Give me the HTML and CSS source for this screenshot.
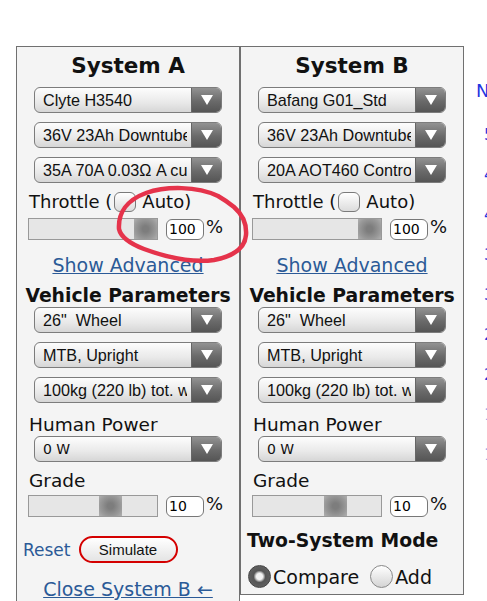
FILE: index.html
```html
<!DOCTYPE html>
<html lang="en">
<head>
  <meta charset="UTF-8">
  <meta name="viewport" content="width=device-width, initial-scale=1.0">
  <title>Motor Simulator</title>
  <link rel="stylesheet" href="styles.css">
</head>
<body>
  <div class="app">
    <section class="panel panel-a">
      <h2>System A</h2>
      <div class="stack">
        <div class="select"><span class="val">Clyte H3540</span><span class="arrow"></span></div>
        <div class="select"><span class="val">36V 23Ah Downtube</span><span class="arrow"></span></div>
        <div class="select"><span class="val">35A 70A 0.03Ω A custom</span><span class="arrow"></span></div>
      </div>
      <label class="check-row">Throttle (<input type="checkbox" class="check"><span class="auto">Auto)</span></label>
      <div class="slider-row">
        <div class="slider"><span class="thumb" style="margin-left:105px"></span></div>
        <input class="num" type="text" value="100"><span class="pct">%</span>
      </div>
      <a class="link show-adv" href="#">Show Advanced</a>
      <div class="heading">Vehicle Parameters</div>
      <div class="stack flush">
        <div class="select"><span class="val">26"&nbsp; Wheel</span><span class="arrow"></span></div>
        <div class="select"><span class="val">MTB, Upright</span><span class="arrow"></span></div>
        <div class="select"><span class="val">100kg (220 lb) tot. weight</span><span class="arrow"></span></div>
      </div>
      <div class="label human">Human Power</div>
      <div class="stack flush">
        <div class="select"><span class="val small">0 W</span><span class="arrow"></span></div>
      </div>
      <div class="label grade">Grade</div>
      <div class="slider-row tight">
        <div class="slider"><span class="thumb" style="margin-left:70px"></span></div>
        <input class="num" type="text" value="10"><span class="pct">%</span>
      </div>
      <div class="actions">
        <a class="reset" href="#">Reset</a>
        <button class="simulate">Simulate</button>
      </div>
      <a class="link close-b" href="#">Close System B ←</a>
    </section>

    <section class="panel panel-b">
      <h2>System B</h2>
      <div class="stack">
        <div class="select"><span class="val">Bafang G01_Std</span><span class="arrow"></span></div>
        <div class="select"><span class="val">36V 23Ah Downtube</span><span class="arrow"></span></div>
        <div class="select"><span class="val">20A AOT460 Controller</span><span class="arrow"></span></div>
      </div>
      <label class="check-row">Throttle (<input type="checkbox" class="check"><span class="auto">Auto)</span></label>
      <div class="slider-row">
        <div class="slider"><span class="thumb" style="margin-left:105px"></span></div>
        <input class="num" type="text" value="100"><span class="pct">%</span>
      </div>
      <a class="link show-adv" href="#">Show Advanced</a>
      <div class="heading">Vehicle Parameters</div>
      <div class="stack flush">
        <div class="select"><span class="val">26"&nbsp; Wheel</span><span class="arrow"></span></div>
        <div class="select"><span class="val">MTB, Upright</span><span class="arrow"></span></div>
        <div class="select"><span class="val">100kg (220 lb) tot. weight</span><span class="arrow"></span></div>
      </div>
      <div class="label human">Human Power</div>
      <div class="stack flush">
        <div class="select"><span class="val small">0 W</span><span class="arrow"></span></div>
      </div>
      <div class="label grade">Grade</div>
      <div class="slider-row tight">
        <div class="slider"><span class="thumb" style="margin-left:71px"></span></div>
        <input class="num" type="text" value="10"><span class="pct">%</span>
      </div>
      <div class="mode-title">Two-System Mode</div>
      <div class="mode-row">
        <label><input type="radio" name="mode" class="radio" checked>Compare</label>
        <label><input type="radio" name="mode" class="radio">Add</label>
      </div>
    </section>

    <div class="chart">
      <div class="axis-title">Nm</div>
      <div class="ticks">
        <span>50</span><span>45</span><span>40</span><span>35</span><span>30</span><span>25</span><span>20</span><span class="faint">15</span><span class="faint">10</span>
      </div>
    </div>
  </div>

  <!-- red marker circle drawn over the screenshot -->
  <svg class="marker" width="487" height="601" viewBox="0 0 487 601">
    <path d="M119,229 C118,213 127,200 146,193 C166,186 197,186 218,196 C225,200 229,203 234,207 C242,214 247,222 246,235 C245,247 235,256 214,260 C193,263 166,257 144,249 C131,244 121,238 119,229" />
  </svg>
</body>
</html>
```

FILE: styles.css
```css
* {
  box-sizing: border-box;
}
html, body {
  margin: 0;
  overflow: hidden;
}
body {
  font-family: "DejaVu Sans", Verdana, sans-serif;
  background: #fff;
  color: #111;
  position: relative;
  height: 601px;
}
.app {
  display: flex;
  align-items: flex-start;
  padding: 46px 0 0 16px;
}
.panel {
  width: 224px;
  flex: none;
  display: flex;
  flex-direction: column;
  background: #f4f4f4;
  border: 1px solid #707070;
  padding: 6px 0;
}
.panel-a {
  padding-bottom: 40px;
}
.panel h2 {
  margin: 0;
  font-size: 21.5px;
  line-height: 26px;
  text-align: center;
}
.stack {
  display: flex;
  flex-direction: column;
  align-items: center;
  gap: 9px;
  margin-top: 8px;
}
.stack.flush {
  margin-top: 0;
}
.select {
  width: 188px;
  height: 26px;
  display: flex;
  border: 1px solid #7c7c7c;
  border-radius: 6px;
  overflow: hidden;
  background: linear-gradient(#fdfdfd, #e9e9e9 60%, #d6d6d6);
}
.select .val {
  flex: 1;
  min-width: 0;
  margin-right: 4px;
  padding-left: 8px;
  font-family: "Liberation Sans", Arial, sans-serif;
  font-size: 16.2px;
  line-height: 24px;
  white-space: nowrap;
  overflow: hidden;
}
.select .val.small {
  font-family: "DejaVu Sans", Verdana, sans-serif;
  font-size: 14px;
}
.select .arrow {
  width: 30px;
  flex: none;
  display: flex;
  align-items: center;
  justify-content: center;
  background: linear-gradient(#929292, #6a6a6a 55%, #555);
  border-left: 1px solid #666;
}
.select .arrow::after {
  content: "";
  border-left: 6px solid transparent;
  border-right: 6px solid transparent;
  border-top: 10px solid #fff;
}
.check-row {
  display: block;
  margin-top: 7px;
  padding-left: 12px;
  font-size: 18px;
  line-height: 23px;
  height: 23px;
}
.check {
  appearance: none;
  width: 22px;
  height: 20px;
  margin: 0 4px 0 2px;
  vertical-align: -4px;
  border: 1px solid #7a7a7a;
  border-radius: 6px;
  background: linear-gradient(#fff, #dcdcdc);
}
.auto {
  margin-left: 2px;
}
.slider-row {
  display: flex;
  align-items: center;
  padding-left: 11px;
  margin-top: 5px;
  height: 22px;
}
.slider-row.tight {
  margin-top: 3px;
}
.slider {
  width: 130px;
  height: 22px;
  display: flex;
  border: 1px solid #999;
  background: #e6e6e6;
}
.thumb {
  width: 23px;
  height: 100%;
  background: radial-gradient(circle, #7d7d7d 20%, #9a9a9a 70%, #b0b0b0);
}
.num {
  width: 38px;
  height: 21px;
  margin-left: 8px;
  padding: 0 2px;
  border: 1px solid #777;
  border-radius: 6px;
  background: #fff;
  font-family: "DejaVu Sans", Verdana, sans-serif;
  font-size: 14px;
  color: #000;
}
.pct {
  margin-left: 2px;
  font-size: 18px;
  line-height: 18px;
  align-self: flex-start;
}
.link {
  display: block;
  color: #2b5a97;
  font-size: 19px;
  line-height: 22px;
  text-align: center;
}
.show-adv {
  margin-top: 14px;
}
.heading {
  margin-top: 9px;
  font-size: 18.8px;
  font-weight: bold;
  line-height: 22px;
  text-align: center;
}
.label {
  padding-left: 12px;
  font-size: 18.5px;
  line-height: 22px;
}
.human {
  margin-top: 11px;
}
.grade {
  margin-top: 8px;
}
.actions {
  display: flex;
  align-items: center;
  gap: 8px;
  margin-top: 19px;
  padding-left: 6px;
}
.reset {
  color: #2b5a97;
  font-size: 17px;
  text-decoration: none;
}
.simulate {
  width: 99px;
  height: 27px;
  border: 2px solid #d40000;
  border-radius: 14px;
  background: linear-gradient(#fff, #e4e4e4);
  font-family: "Liberation Sans", Arial, sans-serif;
  font-size: 15px;
  color: #111;
}
.close-b {
  margin-top: 15px;
}
.mode-title {
  margin-top: 13px;
  padding-left: 6px;
  font-size: 18.8px;
  font-weight: bold;
  line-height: 22px;
}
.mode-row {
  display: flex;
  align-items: center;
  gap: 11px;
  margin-top: 13px;
  padding-left: 7px;
  font-size: 19px;
  line-height: 22px;
}
.mode-row label {
  display: flex;
  align-items: center;
}
.radio {
  appearance: none;
  width: 23px;
  height: 23px;
  margin: 0 2px 0 0;
  border: 1px solid #888;
  border-radius: 50%;
  background: linear-gradient(#fff, #d4d4d4);
}
.radio:checked {
  border-color: #444;
  background: radial-gradient(circle, #f2f2f2 0 3px, #c8c8c8 4px, #555 6px, #6a6a6a);
}
.chart {
  margin-left: 12px;
  padding-top: 34px;
  color: #1f35e0;
  white-space: nowrap;
}
.axis-title {
  font-size: 18px;
  line-height: 22px;
}
.ticks {
  display: flex;
  flex-direction: column;
  padding: 13px 0 0 8px;
  font-size: 16px;
  line-height: 40px;
}
.ticks .faint {
  color: #9aa3ee;
}
.marker {
  position: absolute;
  top: 0;
  left: 0;
  pointer-events: none;
}
.marker path {
  fill: none;
  stroke: #e5334b;
  stroke-width: 4.5;
  stroke-linecap: round;
}
```
